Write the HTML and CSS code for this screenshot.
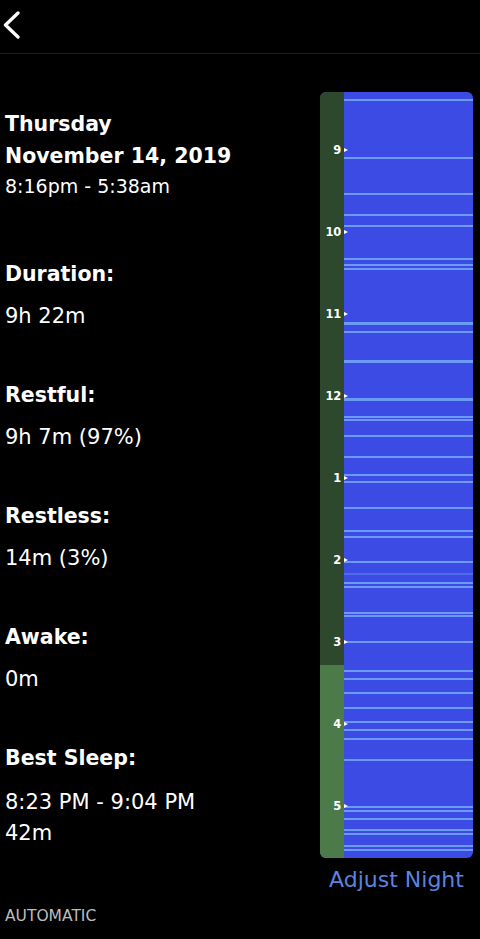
FILE: index.html
```html
<!DOCTYPE html>
<html lang="en">
<head>
<meta charset="utf-8">
<title>Night Detail</title>
<link rel="stylesheet" href="styles.css">
</head>
<body>
<header class="topbar">
  <button class="back" aria-label="Back">
    <svg width="22" height="30" viewBox="0 0 22 30"><path d="M18 2 L5.5 14 L18 26" fill="none" stroke="#fff" stroke-width="3.3" stroke-linecap="round" stroke-linejoin="round"/></svg>
  </button>
</header>
<main class="content">
  <section class="info">
    <div class="date-block">
      <div class="day">Thursday</div>
      <div class="date">November 14, 2019</div>
      <div class="range">8:16pm - 5:38am</div>
    </div>
    <div class="stat">
      <div class="stat-label">Duration:</div>
      <div class="stat-value">9h 22m</div>
    </div>
    <div class="stat">
      <div class="stat-label">Restful:</div>
      <div class="stat-value">9h 7m (97%)</div>
    </div>
    <div class="stat">
      <div class="stat-label">Restless:</div>
      <div class="stat-value">14m (3%)</div>
    </div>
    <div class="stat">
      <div class="stat-label">Awake:</div>
      <div class="stat-value">0m</div>
    </div>
    <div class="stat best">
      <div class="stat-label">Best Sleep:</div>
      <div class="stat-value">8:23 PM - 9:04 PM</div>
      <div class="stat-value tight">42m</div>
    </div>
  </section>
  <section class="chart-col">
    <div class="chart">
      <div class="axis">
        <div class="hour">9</div>
        <div class="hour">10</div>
        <div class="hour">11</div>
        <div class="hour">12</div>
        <div class="hour">1</div>
        <div class="hour">2</div>
        <div class="hour">3</div>
        <div class="hour">4</div>
        <div class="hour">5</div>
      </div>
      <svg class="bars" viewBox="0 0 129 766" preserveAspectRatio="none">
        <g fill="#6a9cf6">
          <rect x="0" y="7" width="129" height="2"/>
          <rect x="0" y="65" width="129" height="2"/>
          <rect x="0" y="101" width="129" height="2"/>
          <rect x="0" y="122" width="129" height="2"/>
          <rect x="0" y="133" width="129" height="2"/>
          <rect x="0" y="166" width="129" height="2"/>
          <rect x="0" y="172" width="129" height="2"/>
          <rect x="0" y="176" width="129" height="2"/>
          <rect x="0" y="230" width="129" height="3"/>
          <rect x="0" y="239" width="129" height="2"/>
          <rect x="0" y="268" width="129" height="3"/>
          <rect x="0" y="306" width="129" height="3"/>
          <rect x="0" y="324" width="129" height="2"/>
          <rect x="0" y="327" width="129" height="2"/>
          <rect x="0" y="343" width="129" height="2"/>
          <rect x="0" y="364" width="129" height="2"/>
          <rect x="0" y="382" width="129" height="2"/>
          <rect x="0" y="389" width="129" height="2"/>
          <rect x="0" y="415" width="129" height="2"/>
          <rect x="0" y="438" width="129" height="2"/>
          <rect x="0" y="444" width="129" height="2"/>
          <rect x="0" y="469" width="129" height="2"/>
          <rect x="0" y="481" width="129" height="2" opacity="0.4"/>
          <rect x="0" y="490" width="129" height="2"/>
          <rect x="0" y="494" width="129" height="2"/>
          <rect x="0" y="520" width="129" height="2"/>
          <rect x="0" y="523" width="129" height="2"/>
          <rect x="0" y="549" width="129" height="2"/>
          <rect x="0" y="578" width="129" height="2"/>
          <rect x="0" y="586" width="129" height="2"/>
          <rect x="0" y="600" width="129" height="2"/>
          <rect x="0" y="615" width="129" height="2"/>
          <rect x="0" y="629" width="129" height="2"/>
          <rect x="0" y="637" width="129" height="2"/>
          <rect x="0" y="646" width="129" height="2"/>
          <rect x="0" y="667" width="129" height="2"/>
          <rect x="0" y="714" width="129" height="2"/>
          <rect x="0" y="718" width="129" height="2"/>
          <rect x="0" y="726" width="129" height="2"/>
          <rect x="0" y="737" width="129" height="2"/>
          <rect x="0" y="741" width="129" height="2"/>
          <rect x="0" y="753" width="129" height="2"/>
          <rect x="0" y="757" width="129" height="2"/>
        </g>
      </svg>
    </div>
    <div class="adjust">Adjust Night</div>
  </section>
</main>
<footer class="mode">AUTOMATIC</footer>
</body>
</html>
```
FILE: styles.css
```css
* { box-sizing: border-box; }
html, body {
  margin: 0;
  padding: 0;
  background: #000;
  color: #fff;
  font-family: "DejaVu Sans", "Open Sans", sans-serif;
}
body {
  width: 480px;
  height: 939px;
  overflow: hidden;
}
.topbar {
  height: 54px;
  border-bottom: 1px solid #1e1e1e;
  display: flex;
  align-items: flex-start;
}
.back {
  background: none;
  border: 0;
  padding: 0;
  margin: 11px 0 0 0;
  width: 24px;
  height: 30px;
  display: block;
}
.back svg { display: block; }
.content {
  display: flex;
  padding-top: 38px;
}
.info {
  flex: 1;
  padding-left: 5px;
  padding-top: 17px;
}
.day, .date {
  font-size: 20.5px;
  font-weight: 700;
  line-height: 31px;
}
.date {
  margin-top: 1px;
}
.range {
  font-size: 19px;
  line-height: 30px;
  margin-top: -1px;
}
.date-block { padding-bottom: 9px; }
.stat { margin-top: 49px; }
.stat-label {
  font-size: 20.5px;
  font-weight: 700;
  line-height: 30px;
}
.stat-value {
  font-size: 21px;
  line-height: 30px;
  margin-top: 12px;
}
.best .stat-value {
  margin-top: 14px;
  line-height: 31px;
}
.best .stat-value.tight { margin-top: 0; }
.chart-col {
  width: 153px;
  margin-right: 7px;
  display: flex;
  flex-direction: column;
}
.chart {
  height: 766px;
  border-radius: 6px;
  overflow: hidden;
  display: flex;
  background: #3c4be3;
}
.axis {
  width: 24px;
  flex: none;
  position: relative;
  z-index: 1;
  padding-top: 17px;
  background: linear-gradient(to bottom, #2d482d 0, #2d482d 573px, #4d7a49 573px, #4d7a49 100%);
}
.hour {
  position: relative;
  height: 82px;
  line-height: 82px;
  text-align: right;
  padding-right: 3px;
  font-size: 11.5px;
  font-weight: 700;
  color: #fff;
  letter-spacing: -0.3px;
}
.hour::after {
  content: "";
  position: absolute;
  right: -4px;
  top: 50%;
  margin-top: -2.5px;
  border-left: 4px solid #fff;
  border-top: 2.5px solid transparent;
  border-bottom: 2.5px solid transparent;
}
.bars {
  flex: 1;
  width: 129px;
  height: 766px;
  display: block;
}
.adjust {
  margin-top: 8px;
  line-height: 28px;
  text-align: center;
  font-size: 22px;
  color: #5a84e0;
  white-space: nowrap;
}
.mode {
  margin-top: 14px;
  padding-left: 5px;
  font-size: 15.5px;
  line-height: 16px;
  color: #bdbdbd;
}
```
